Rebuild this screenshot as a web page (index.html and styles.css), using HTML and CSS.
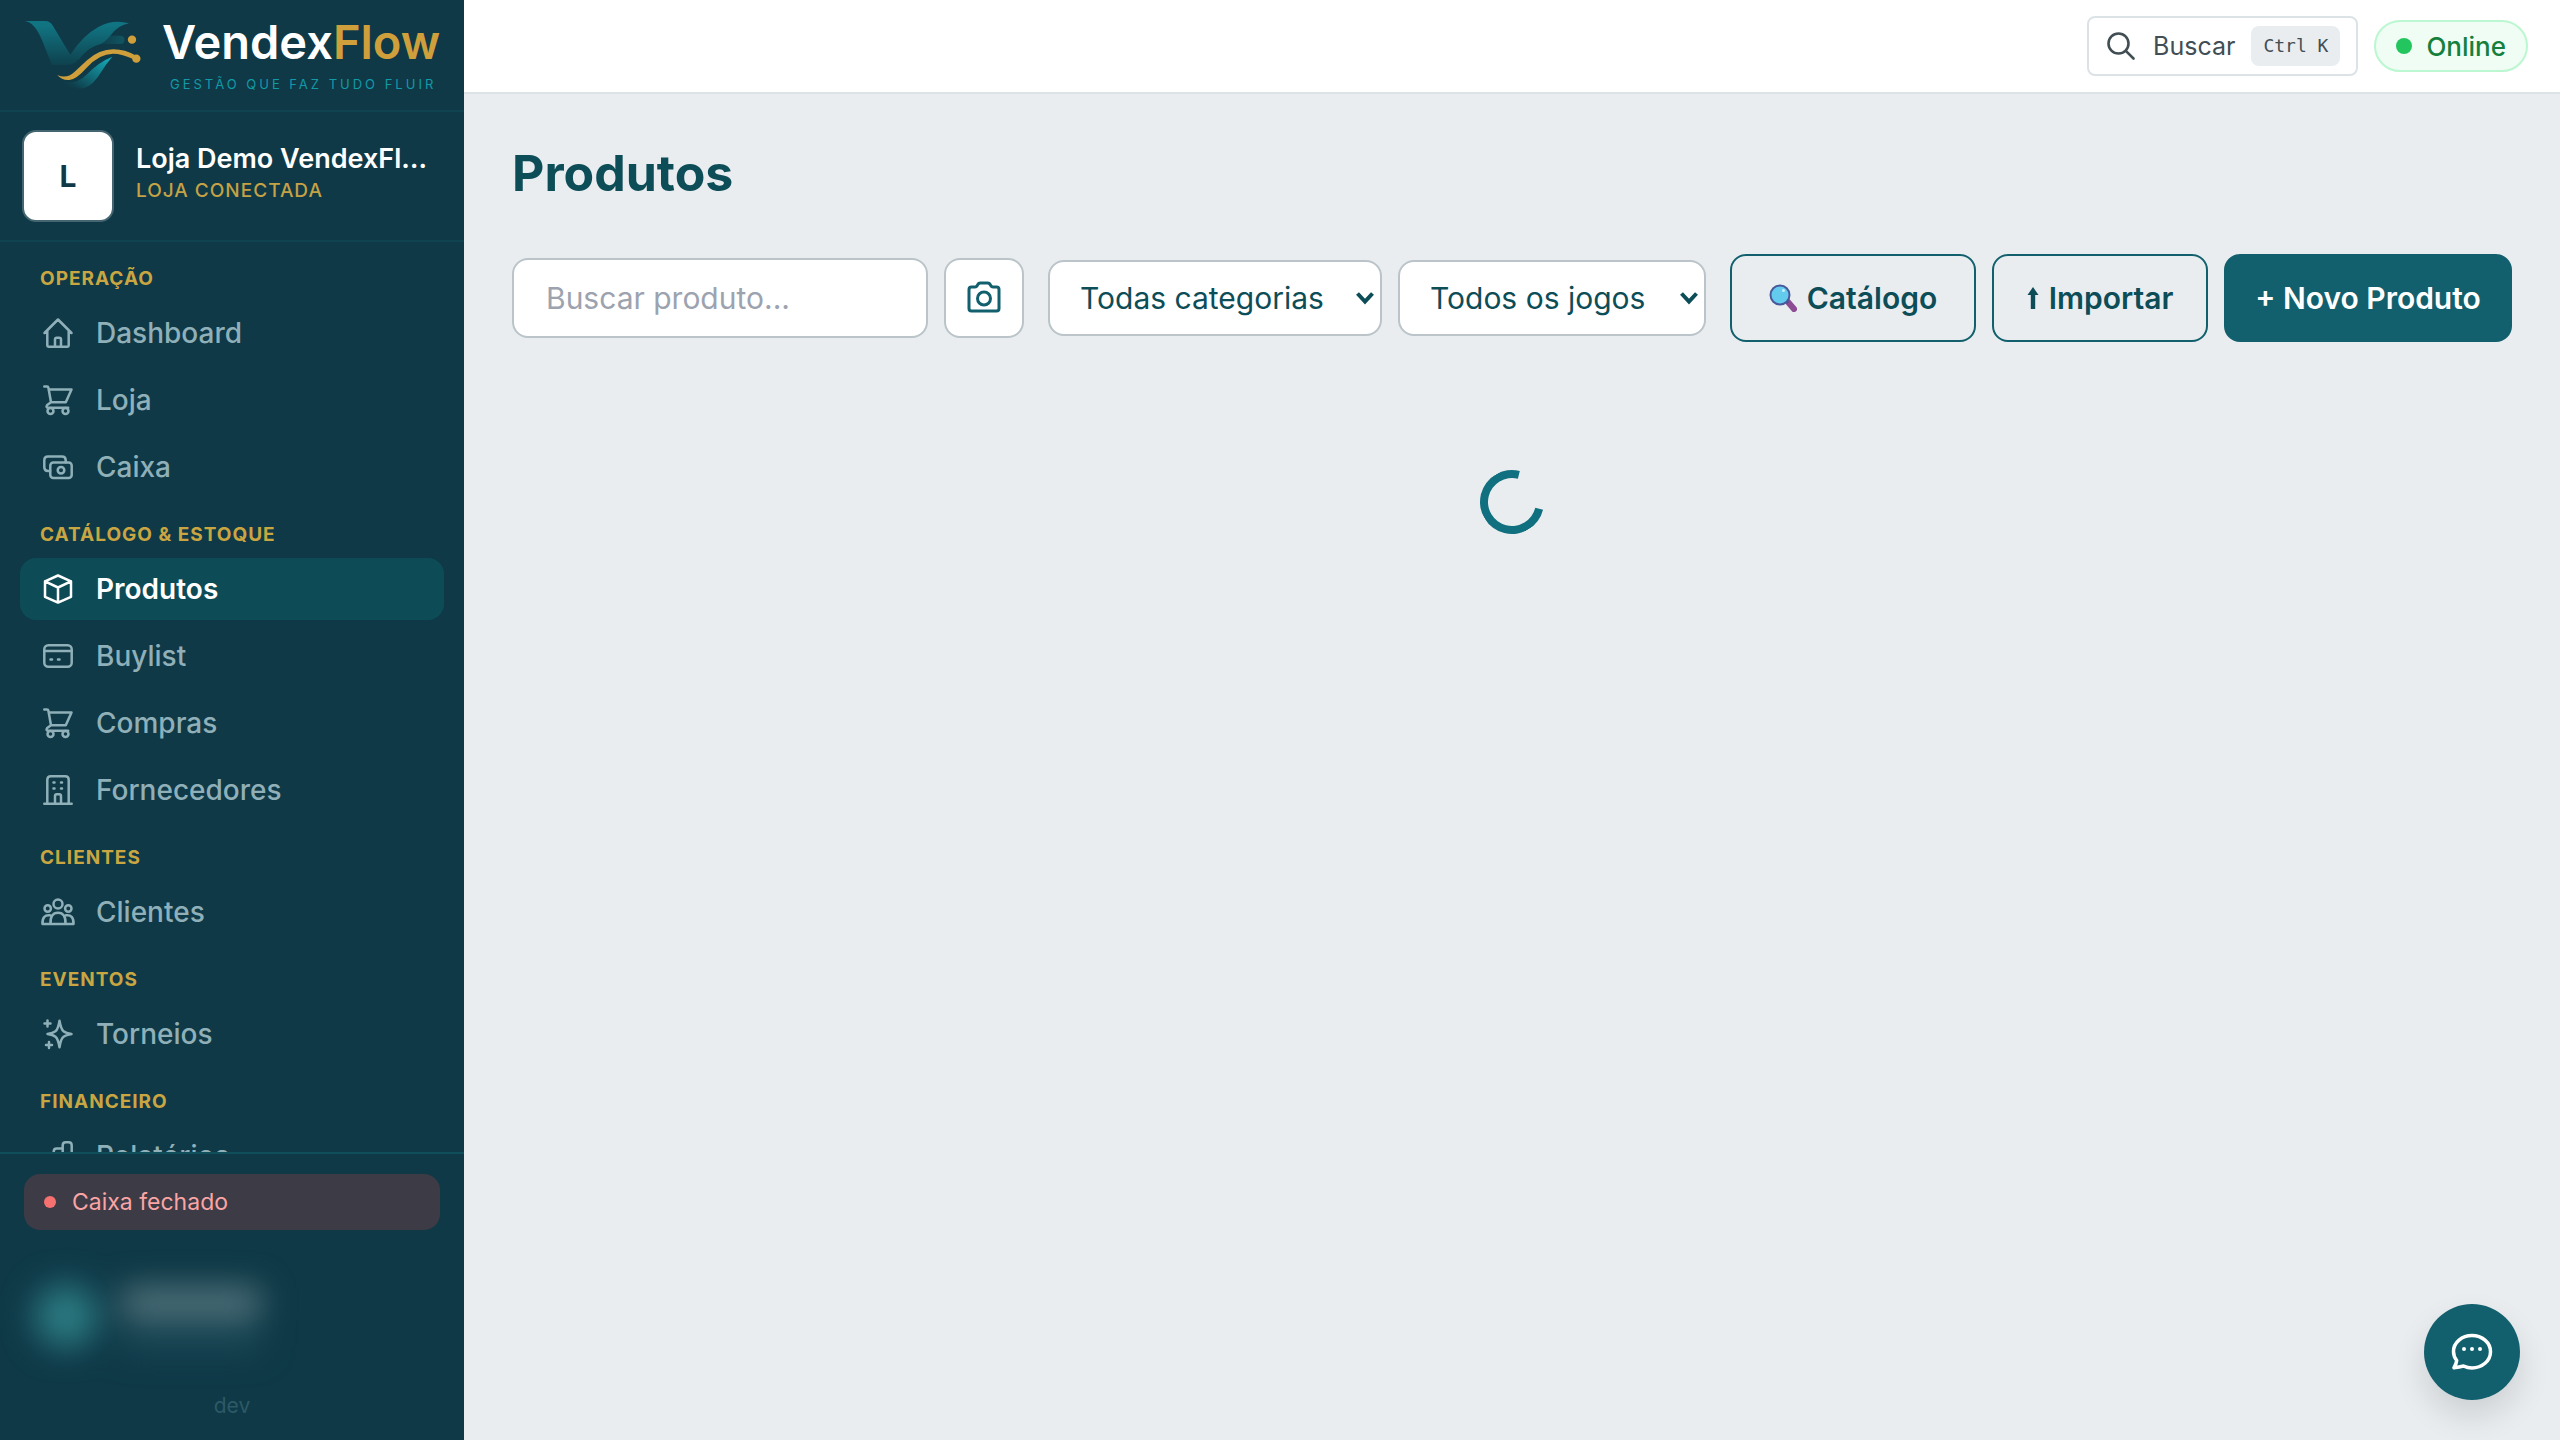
FILE: index.html
```
<!DOCTYPE html>
<html lang="pt-BR">
<head>
    <meta charset="utf-8" />
    <meta name="viewport" content="width=device-width, initial-scale=1" />
    <title>VendexFlow - Produtos</title>
    <link rel="stylesheet" href="styles.css">
</head>
<body>
    <!--Icons-->
    <svg class="sprite" aria-hidden="true">
        <symbol id="i-home" viewBox="-3 -3 36 36"><path d="M1.5 15 15 1.5 28.5 15M4.3 13v14.5q0 1.200 1.200 1.200h19q1.200 0 1.200-1.200V13M12 28.500v-7q0-1.800 1.800-1.800h2.400q1.800 0 1.800 1.800v7" /></symbol>
        <symbol id="i-cart" viewBox="-3 -3 36 36"><path d="M1.300 1.500H4q1.200 0 1.400 1.200L8 17.300 4.200 20q-1.800 2.400 1 2.800h20M5.800 4.500h22.700l-5.700 12.800H8" /><circle cx="7.500" cy="26" r="3" /><circle cx="22.500" cy="26" r="3" /></symbol>
        <symbol id="i-cash" viewBox="-3 -3 36 36"><path d="M7 19H5q-3.700 0-3.700-3.700V8.300Q1.300 4.500 5 4.500h14q3.700 0 3.700 3.700v2" /><rect x="7.300" y="10.500" width="21.400" height="15.500" rx="3" /><circle cx="18" cy="18.200" r="3.300" /></symbol>
        <symbol id="i-box" viewBox="-3 -3 36 36"><path d="M15 1.500 28 7.300v15.500L15 28.600 2 22.800V7.300zM2 7.300l13 6.200 13-6.200M15 13.500v15" /></symbol>
        <symbol id="i-card" viewBox="-3 -3 36 36"><rect x="1.300" y="4.300" width="27.400" height="21.400" rx="4" /><path d="M1.300 10h27.400M7.500 18.500H9M15 18.500h1.500" /></symbol>
        <symbol id="i-building" viewBox="-3 -3 36 36"><path d="M1.300 28.700h27.400M4.300 28.500V4.800q0-3.500 3.500-3.500h14.400q3.500 0 3.500 3.500v23.700M12 28.500V21q0-1.800 1.800-1.800h2.400Q18 19.200 18 21v7.500M10.500 7.500h1M18 7.500h1M10.500 13.500h1M18 13.500h1" /></symbol>
        <symbol id="i-users" viewBox="-3 -3 36 36"><circle cx="15" cy="7" r="4.500" /><circle cx="4.700" cy="11.500" r="3.200" /><circle cx="25.300" cy="11.500" r="3.200" /><path d="M7.500 27q-.5-11.300 7.500-11.300T22.500 27zM7.500 27H-.5q-.5-9.500 7.500-8.700M22.500 27h8q.5-9.500-7.500-8.700" /></symbol>
        <symbol id="i-star" viewBox="-3 -3 36 36"><path d="M16.500 1.800q1.500 8.500 4 10.500t8 2.700q-5.500 1-8 2.700t-4 10.500q-1.500-8.500-4-10.500T4.500 15q5.500-1 8-2.700t4-10.500zM4.500 1.500v6M1.500 4.500h6M6 23v6M3 26h6" /></symbol>
        <symbol id="i-chart" viewBox="-3 -3 36 36"><path d="M1.300 28.500h27.400V4.300q0-3-3-3h-3q-3 0-3 3v24M19.700 7.500h-6q-3 0-3 3v18M10.500 17H4.300q-3 0-3 3v8.500" /></symbol>
    </svg>

    <div class="app">
        <!--Sidebar-->
        <aside class="sidebar">
            <div class="brand">
                <svg class="brand-mark" viewBox="70 60 352 210" aria-hidden="true">
                    <defs>
                        <linearGradient id="g1" x1="0" y1="0" x2="0" y2="1">
                            <stop offset="0.1" stop-color="#117482" />
                            <stop offset="1" stop-color="#0f414e" />
                        </linearGradient>
                        <linearGradient id="g2" x1="0" y1="1" x2="1" y2="0">
                            <stop offset="0.150" stop-color="#0f3d4a" />
                            <stop offset="0.900" stop-color="#14a3b1" />
                        </linearGradient>
                        <linearGradient id="g3">
                            <stop offset="0" stop-color="#0f3a47" />
                            <stop offset="1" stop-color="#105662" />
                        </linearGradient>
                    </defs>
                    <rect x="290" y="107" width="80" height="25" rx="12" fill="url(#g3)" />
                    <path fill="url(#g1)" d="M72 63H132q16 0 24 15l52 86q38-58 84-83 44-25 92-11-32 5-56 37-18 23-38 28-22 6-45 30-20 30-50 30h-41q-8-16-30-72Q102 68 72 63z" />
                    <path fill="url(#g2)" d="M334 170q-18 20-34 47-24 40-50 47-32 8-67-19 40 12 75-22 35-37 76-53z" />
                    <path fill="#cf9f3b" d="M169 225q28 13 52-10 18-16 37-34 36-33 79-33 36 0 66 18l-5 12q-34-17-62-17-41 0-79 42-30 34-52 37-22 2-36-15z" />
                    <circle cx="406" cy="176" r="12.500" fill="#cf9f3b" />
                    <circle cx="393" cy="119" r="12.500" fill="#cf9f3b" />
                </svg>
                <div class="brand-text">
                    <div class="brand-name">Vendex<span>Flow</span></div>
                    <div class="brand-tag">GESTÃO QUE FAZ TUDO FLUIR</div>
                </div>
            </div>

            <div class="store">
                <div class="store-logo">L</div>
                <div class="store-info">
                    <div class="store-name">Loja Demo VendexFlow</div>
                    <div class="store-status">LOJA CONECTADA</div>
                </div>
            </div>

            <nav class="nav">
                <h2>OPERAÇÃO</h2>
                <ul>
                    <li><a href="#"><svg><use href="#i-home" /></svg>Dashboard</a></li>
                    <li><a href="#"><svg><use href="#i-cart" /></svg>Loja</a></li>
                    <li><a href="#"><svg><use href="#i-cash" /></svg>Caixa</a></li>
                </ul>
                <h2>CATÁLOGO &amp; ESTOQUE</h2>
                <ul>
                    <li><a href="#" class="active"><svg><use href="#i-box" /></svg>Produtos</a></li>
                    <li><a href="#"><svg><use href="#i-card" /></svg>Buylist</a></li>
                    <li><a href="#"><svg><use href="#i-cart" /></svg>Compras</a></li>
                    <li><a href="#"><svg><use href="#i-building" /></svg>Fornecedores</a></li>
                </ul>
                <h2>CLIENTES</h2>
                <ul>
                    <li><a href="#"><svg><use href="#i-users" /></svg>Clientes</a></li>
                </ul>
                <h2>EVENTOS</h2>
                <ul>
                    <li><a href="#"><svg><use href="#i-star" /></svg>Torneios</a></li>
                </ul>
                <h2>FINANCEIRO</h2>
                <ul>
                    <li><a href="#"><svg><use href="#i-chart" /></svg>Relatórios</a></li>
                </ul>
            </nav>

            <div class="sidebar-foot">
                <div class="cash-status"><span class="dot"></span>Caixa fechado</div>
                <div class="user" aria-hidden="true">
                    <div class="user-avatar"></div>
                    <div class="user-lines">
                        <div class="user-name"></div>
                        <div class="user-role"></div>
                    </div>
                </div>
                <div class="version">dev</div>
            </div>
        </aside>

        <div class="page">
            <!--Topbar-->
            <header class="topbar">
                <button class="search-btn" type="button">
                    <svg viewBox="0 0 28 28" aria-hidden="true"><circle cx="11.500" cy="11.500" r="10" /><path d="M18.800 18.800 26.500 26.500" /></svg>
                    <span>Buscar</span>
                    <kbd>Ctrl K</kbd>
                </button>
                <div class="online"><span class="dot"></span>Online</div>
            </header>

            <main class="content">
                <h1>Produtos</h1>
                <div class="toolbar">
                    <div class="group grow">
                        <input class="field" type="text" placeholder="Buscar produto..." aria-label="Buscar produto" />
                        <button class="camera" type="button" aria-label="Ler código">
                            <svg viewBox="0 0 34 34"><path d="M4.500 6H8q1.500 0 2.300-1.500 1-2.500 3-2.500h7.400q2 0 3 2.500Q24.500 6 26 6h3.500Q32 6 32 8.500v19q0 2.500-2.500 2.500h-25Q2 30 2 27.500v-19Q2 6 4.500 6z" /><circle cx="17" cy="17.500" r="6.500" /></svg>
                        </button>
                    </div>
                    <div class="group">
                        <div class="select">
                            <select class="cat" aria-label="Categoria"><option>Todas categorias</option></select>
                            <svg viewBox="0 0 18 14" aria-hidden="true"><path d="m1.500 2.500 7.500 8 7.500-8" /></svg>
                        </div>
                        <div class="select">
                            <select class="game" aria-label="Jogo"><option>Todos os jogos</option></select>
                            <svg viewBox="0 0 18 14" aria-hidden="true"><path d="m1.500 2.500 7.500 8 7.500-8" /></svg>
                        </div>
                    </div>
                    <div class="group">
                        <button class="btn btn-catalog" type="button">
                            <svg class="lens" viewBox="0 0 28 28" aria-hidden="true"><path d="m19 18 6 7" stroke="#8d4b93" stroke-width="6" stroke-linecap="round" /><path d="m16 16 3 3" stroke="#4a4f86" stroke-width="3" /><circle cx="11" cy="11" r="9.500" fill="#62cbee" stroke="#48599b" stroke-width="2" /><circle cx="14.500" cy="6.500" r="1.500" fill="#c9f1ff" /></svg>
                            Catálogo
                        </button>
                        <button class="btn btn-import" type="button">
                            <svg class="arrow" viewBox="0 0 12 22" aria-hidden="true"><path d="m6 0 5.500 8H8.200v14H3.800V8H.5z" fill="#0d4d58" /></svg>
                            Importar
                        </button>
                        <button class="btn btn-primary" type="button">+ Novo Produto</button>
                    </div>
                </div>
                <div class="spinner" role="status" aria-label="Carregando"></div>
            </main>
        </div>
    </div>

    <button class="chat" type="button" aria-label="Chat">
        <svg viewBox="0 0 42 38"><path d="M21 2.500c10 0 18.500 7 18.500 16.200S31 35 21 35q-4.500 0-8.500-2-4 1-9.500 1.700 2.300-3.700 2.700-7.200-3.200-4-3.200-9C2.500 9.500 11 2.500 21 2.500z" /><circle cx="13" cy="16" r="2" /><circle cx="21" cy="16" r="2" /><circle cx="29" cy="16" r="2" /></svg>
    </button>
</body>
</html>
```

FILE: styles.css
```
* {
    box-sizing: border-box;
}

body {
    margin: 0;
    background: #e9edf0;
    color: #0d4d58;
    font-family: Inter, "Noto Sans", sans-serif;
    font-size: 28px;
}

button, input, select {
    font: inherit;
    color: inherit;
    margin: 0;
}

button {
    cursor: pointer;
}

.sprite {
    position: absolute;
    width: 0;
    height: 0;
}

.app {
    display: flex;
    height: 100vh;
}

/* sidebar */
.sidebar {
    display: flex;
    flex-direction: column;
    flex: none;
    width: 464px;
    background: #0f3947;
}

.brand {
    display: flex;
    gap: 20px;
    padding: 20px 24px;
    height: 112px;
    border-bottom: 2px solid #0e434f;
}

.brand-mark {
    flex: none;
    width: 118px;
    height: 70px;
}

.brand-name {
    color: #fff;
    font-size: 47px;
    font-weight: 600;
    line-height: 44px;
}

    .brand-name span {
        color: #cf9f3b;
    }

.brand-tag {
    margin-top: 12px;
    padding-left: 8px;
    color: #129aa8;
    font-size: 13px;
    line-height: 16px;
    letter-spacing: 3px;
    white-space: nowrap;
}

.store {
    display: flex;
    align-items: center;
    gap: 22px;
    padding: 18px 32px 18px 22px;
    border-bottom: 2px solid #0e434f;
}

.store-logo {
    display: flex;
    align-items: center;
    justify-content: center;
    flex: none;
    width: 92px;
    height: 92px;
    border: 2px solid #456670;
    border-radius: 14px;
    background: #fff;
    color: #0f3947;
    font-size: 30px;
    font-weight: 700;
}

.store-info {
    min-width: 0;
    padding-bottom: 4px;
}

.store-name {
    overflow: hidden;
    color: #fff;
    font-size: 27px;
    font-weight: 600;
    line-height: 34px;
    text-overflow: ellipsis;
    white-space: nowrap;
}

.store-status {
    color: #c4a245;
    font-size: 19px;
    font-weight: 500;
    line-height: 30px;
    letter-spacing: 1px;
}

.nav {
    flex: 1;
    min-height: 0;
    overflow: hidden;
    padding: 0 20px;
}

    .nav h2 {
        margin: 25px 0 11px;
        padding-left: 20px;
        color: #c9a641;
        font-size: 19px;
        font-weight: 700;
        line-height: 24px;
        letter-spacing: 1px;
    }

    .nav ul {
        display: flex;
        flex-direction: column;
        gap: 5px;
        margin: 0;
        padding: 0;
        list-style: none;
    }

    .nav a {
        display: flex;
        align-items: center;
        gap: 20px;
        height: 62px;
        padding: 0 20px 1px;
        border-radius: 16px;
        color: #8fb0b8;
        font-size: 28px;
        font-weight: 500;
        text-decoration: none;
    }

    .nav a.active {
        background: #0d4c56;
        color: #fff;
        font-weight: 600;
    }

    .nav svg {
        width: 36px;
        height: 36px;
        fill: none;
        stroke: currentColor;
        stroke-width: 2.500;
        stroke-linecap: round;
        stroke-linejoin: round;
    }

.sidebar-foot {
    padding: 20px 24px 18px;
    border-top: 2px solid #0e4f5b;
}

.dot {
    flex: none;
    border-radius: 50%;
}

.cash-status {
    display: flex;
    align-items: center;
    gap: 16px;
    height: 56px;
    padding: 0 20px;
    border-radius: 16px;
    background: #3d3b46;
    color: #faa5a5;
    font-size: 23px;
}

    .cash-status .dot {
        width: 12px;
        height: 12px;
        background: #f87171;
    }

.user {
    display: flex;
    gap: 24px;
    margin-top: 48px;
    padding: 0 10px;
    height: 112px;
    filter: blur(16px);
}

.user-avatar {
    width: 64px;
    height: 64px;
    margin-top: 6px;
    border-radius: 50%;
    background: #2b7a82;
}

.user-name {
    width: 138px;
    height: 30px;
    margin-top: 10px;
    background: #56777f;
}

.user-role {
    width: 138px;
    height: 20px;
    margin-top: 12px;
    background: #1c4a59;
}

.version {
    color: #2c5966;
    font-size: 21px;
    line-height: 32px;
    text-align: center;
}

/* topbar */
.page {
    display: flex;
    flex: 1;
    flex-direction: column;
    min-width: 0;
}

.topbar {
    display: flex;
    align-items: center;
    justify-content: flex-end;
    gap: 16px;
    height: 94px;
    padding: 0 32px;
    border-bottom: 2px solid #dce3e7;
    background: #fff;
}

.search-btn {
    display: flex;
    align-items: center;
    gap: 16px;
    height: 60px;
    padding: 0 16px 0 18px;
    border: 2px solid #dce3e7;
    border-radius: 8px;
    background: #fff;
    color: #414e54;
    font-size: 25px;
}

    .search-btn svg {
        width: 28px;
        height: 28px;
        margin-right: 2px;
        fill: none;
        stroke: currentColor;
        stroke-width: 2.600;
        stroke-linecap: round;
    }

    .search-btn kbd {
        padding: 0 12px;
        border-radius: 8px;
        background: #e9edf0;
        font-family: "DejaVu Sans Mono", monospace;
        font-size: 18px;
        line-height: 40px;
    }

.online {
    display: flex;
    align-items: center;
    gap: 14px;
    height: 52px;
    padding: 0 20px;
    border: 2px solid #bbf7d0;
    border-radius: 26px;
    background: #f0fdf4;
    color: #15803d;
    font-size: 26px;
    font-weight: 500;
}

    .online .dot {
        width: 16px;
        height: 16px;
        background: #22c55e;
    }

/* content */
.content {
    flex: 1;
    padding: 48px;
}

    .content h1 {
        margin: 0 0 50px;
        font-size: 50px;
        font-weight: 700;
        line-height: 62px;
    }

.toolbar {
    display: flex;
    align-items: center;
    gap: 24px;
}

.group {
    display: flex;
    align-items: center;
    gap: 16px;
}

    .group.grow {
        flex: 1;
        min-width: 0;
    }

.field {
    flex: 1;
    min-width: 0;
    height: 80px;
    padding: 0 32px;
    border: 2px solid #bac4c9;
    border-radius: 16px;
    background: #fff;
    font-size: 30px;
}

    .field::placeholder {
        color: #9ca3af;
        opacity: 1;
    }

.camera {
    display: flex;
    align-items: center;
    justify-content: center;
    width: 80px;
    height: 80px;
    padding: 0;
    border: 2px solid #bac4c9;
    border-radius: 16px;
    background: #fff;
}

    .camera svg {
        width: 34px;
        height: 34px;
        fill: none;
        stroke: #12606d;
        stroke-width: 3;
    }

.select {
    position: relative;
}

    .select select {
        height: 76px;
        padding: 0 30px;
        border: 2px solid #bac4c9;
        border-radius: 16px;
        background: #fff;
        font-size: 30px;
        appearance: none;
    }

    .select .cat {
        width: 334px;
    }

    .select .game {
        width: 308px;
    }

    /* chevron over the select */
    .select svg {
        position: absolute;
        top: 31px;
        right: 8px;
        width: 18px;
        height: 14px;
        fill: none;
        stroke: #0d4d58;
        stroke-width: 4;
        pointer-events: none;
    }

.btn {
    display: flex;
    align-items: center;
    justify-content: center;
    gap: 10px;
    height: 88px;
    padding: 0 24px;
    border: 2px solid #12606d;
    border-radius: 16px;
    background: transparent;
    font-size: 30px;
    font-weight: 600;
    white-space: nowrap;
}

.btn-catalog {
    width: 246px;
}

.btn-import {
    width: 216px;
}

.btn-primary {
    width: 288px;
    background: #12606d;
    color: #fff;
}

.lens {
    width: 28px;
    height: 28px;
}

.arrow {
    width: 12px;
    height: 22px;
}

.spinner {
    width: 64px;
    height: 64px;
    margin: 128px auto 0;
    border: 8px solid #11707f;
    border-right-color: transparent;
    border-radius: 50%;
    transform: rotate(-31deg);
}

.chat {
    position: fixed;
    right: 40px;
    bottom: 40px;
    display: flex;
    align-items: center;
    justify-content: center;
    width: 96px;
    height: 96px;
    padding: 0;
    border: 0;
    border-radius: 50%;
    background: #12606d;
    box-shadow: 0 16px 32px rgba(0, 0, 0, .12);
}

    .chat svg {
        width: 42px;
        height: 38px;
        fill: none;
        stroke: #fff;
        stroke-width: 3.500;
        stroke-linejoin: round;
    }

    .chat circle {
        fill: #fff;
        stroke: none;
    }
```
